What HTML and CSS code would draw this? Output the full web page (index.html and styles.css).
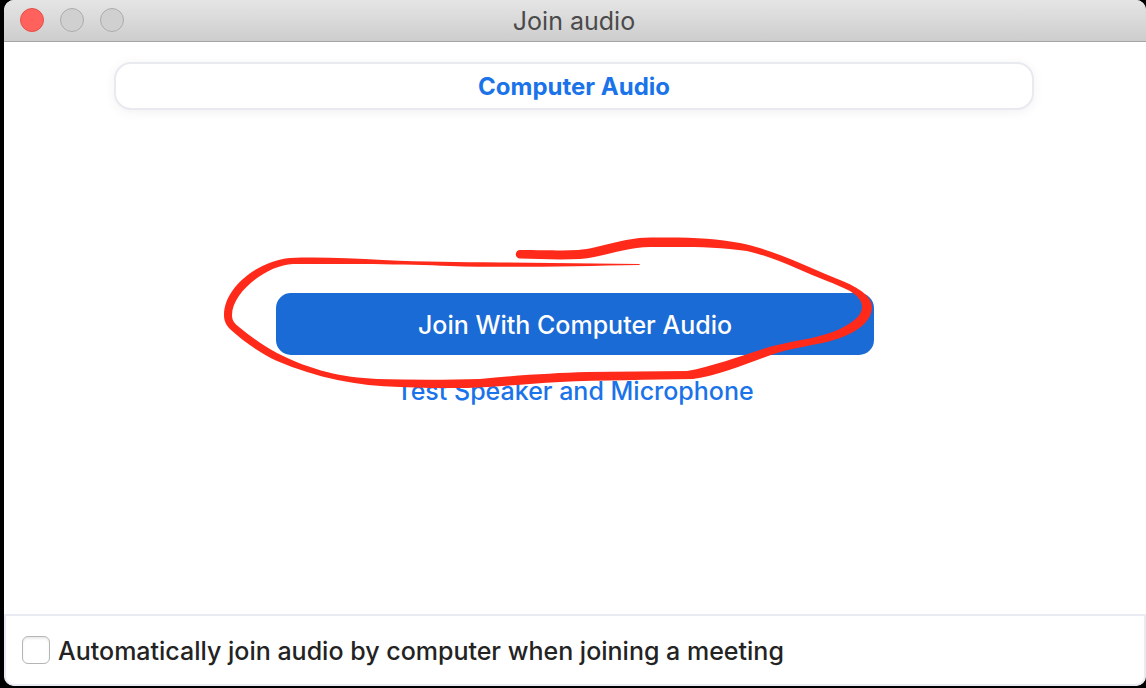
FILE: index.html
```html
<!DOCTYPE html>
<html lang="en">
<head>
<meta charset="utf-8">
<meta name="viewport" content="width=device-width, initial-scale=1">
<title>Join audio</title>
<link rel="stylesheet" href="styles.css">
</head>
<body>
<div class="window">
  <header class="titlebar">
    <div class="controls">
      <button class="control control-close" type="button" aria-label="Close"></button>
      <button class="control" type="button" aria-label="Minimize" disabled></button>
      <button class="control" type="button" aria-label="Zoom" disabled></button>
    </div>
    <h1 class="title">Join audio</h1>
  </header>
  <main class="content">
    <button class="tab" type="button">Computer Audio</button>
    <div class="actions">
      <button class="join" type="button">Join With Computer Audio</button>
      <a class="test" href="#">Test Speaker and Microphone</a>
      <svg class="scribble" width="660" height="160" viewBox="220 232 660 160" aria-hidden="true">
        <path fill="#ff2a1a" d="M520 250C545 250 562 251 578 250C602 248 620 238 650 237.500C690 237 715 238 740 243C772 249 808 267 840 280C860 288 872 297 872 307C872 326 846 339 817 344C799 348 789 349 777 353C749 362 721 375 693 379C650 380 600 380 560 382C525 384 495 387 467 388C440 388 420 388 400 387C357 386 317 378 277 361C260 353 243 341 231 330C226 325 224 321 224 315C224 287 258 261 290 258C318 257 349 258 383 260C425 262 457 262 500 262.500L639 264Q641 264.500 639 265C580 266 510 268 450 266C405 264 343 264 293 264C267 265 232 292 232 315C232 320 234 323 239 327C251 337 264 346 277 353C313 371 341 377 377 379C411 380 447 380 480 379C520 375 555 373 587 372L687 371C715 366 745 354 773 346C797 340 821 338 840 329C854 322 862 315 862 307C862 301 858 296 850 291C842 287 835 284 827 281C801 271 774 257 747 251C715 246 680 247 650 247C625 247 605 257 580 259C559 260 538 259 520 258.500A4 4 0 0 1 520 250Z"/>
      </svg>
    </div>
  </main>
  <footer class="footer">
    <label class="auto"><input class="check" type="checkbox"><span class="auto-text">Automatically join audio by computer when joining a meeting</span></label>
  </footer>
</div>
</body>
</html>
```
FILE: styles.css
```css
* { box-sizing: border-box; }
body {
  margin: 0;
  min-height: 100vh;
  display: flex;
  padding: 0 0 2px 4px;
  background: #000;
  font-family: Inter, "Liberation Sans", sans-serif;
  font-size: 25px;
  font-weight: 500;
  line-height: 32px;
}
button { font: inherit; }
.window {
  flex: 1;
  display: flex;
  flex-direction: column;
  overflow: hidden;
  border-radius: 10px;
  background: #fff;
}
.titlebar {
  display: grid;
  grid-template-columns: 1fr auto 1fr;
  align-items: center;
  height: 42px;
  padding: 0 18px 2px 16px;
  border-bottom: 1px solid #a5a5a5;
  background: linear-gradient(#e5e5e5, #cdcdcd);
}
.controls { display: flex; gap: 16px; }
.control {
  width: 24px;
  height: 24px;
  padding: 0;
  border: 1px solid #acacac;
  border-radius: 50%;
  background: #d0d0d0;
}
.control-close { border-color: #e2514c; background: #ff625c; }
.title {
  margin: 0;
  padding-top: 2px;
  color: #4a4a4a;
  font-size: 25px;
  font-weight: 400;
}
.content {
  flex: 1;
  display: flex;
  flex-direction: column;
  align-items: center;
  padding: 20px 0;
}
.tab {
  align-self: stretch;
  height: 48px;
  margin: 0 112px 0 110px;
  padding: 2px 0 0;
  border: 2px solid #e9e9f0;
  border-radius: 17px;
  background: #fff;
  box-shadow: 0 2px 12px rgba(0, 0, 0, 0.06);
  color: #1a73e8;
  font-size: 24px;
  font-weight: 700;
}
.actions {
  position: relative;
  display: flex;
  flex-direction: column;
  align-items: center;
  gap: 20px;
  width: 100%;
  max-width: 598px;
  margin-top: 183px;
}
.join {
  width: 100%;
  height: 62px;
  padding: 2px 0 0;
  border: 0;
  border-radius: 15px;
  background: #1a6bd6;
  color: #fff;
}
.test { color: #1a73e8; text-decoration: none; }
.scribble {
  position: absolute;
  top: -61px;
  left: -56px;
  pointer-events: none;
}
.footer {
  padding: 18px 16px;
  border: 2px solid #e8ecf2;
  border-radius: 0 0 10px 10px;
  color: #232323;
}
.auto { display: flex; align-items: center; gap: 8px; }
.auto-text { padding-top: 2px; font-weight: 450; line-height: 30px; }
.check {
  appearance: none;
  flex: none;
  width: 28px;
  height: 28px;
  margin: 0;
  border: 1px solid #b5b5b5;
  border-radius: 6px;
  background: #fff;
  box-shadow: inset 0 2px 2px rgba(0, 0, 0, 0.08);
}
.check:checked { background: #1a6bd6; }
```
